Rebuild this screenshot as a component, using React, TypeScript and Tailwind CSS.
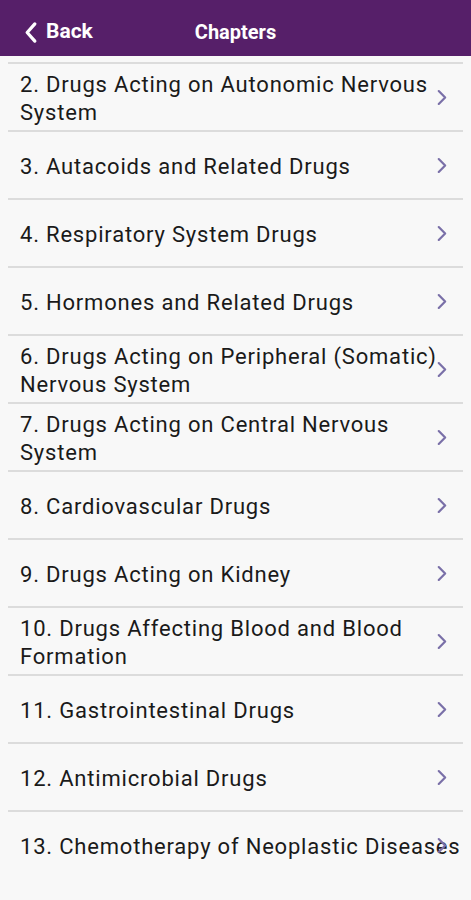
import React from 'react';

const chapters = [
  '2. Drugs Acting on Autonomic Nervous System',
  '3. Autacoids and Related Drugs',
  '4. Respiratory System Drugs',
  '5. Hormones and Related Drugs',
  '6. Drugs Acting on Peripheral (Somatic) Nervous System',
  '7. Drugs Acting on Central Nervous System',
  '8. Cardiovascular Drugs',
  '9. Drugs Acting on Kidney',
  '10. Drugs Affecting Blood and Blood Formation',
  '11. Gastrointestinal Drugs',
  '12. Antimicrobial Drugs',
  '13. Chemotherapy of Neoplastic Diseases',
];

const Chevron: React.FC<{ className?: string }> = ({ className }) => (
  <svg viewBox="0 0 12 20" className={className} fill="none" stroke="currentColor" strokeWidth="2.4" strokeLinecap="round" strokeLinejoin="round">
    <path d="M3 3l7 7-7 7" />
  </svg>
);

const App: React.FC = () => {
  return (
    <div className="w-[471px] h-[900px] overflow-hidden bg-[#f8f8f8] font-['Roboto',sans-serif]">
      {/* Header */}
      <div className="h-[56px] bg-[#561f69] flex items-center relative pt-[8px]">
        <div className="flex items-center pl-[24px] text-white">
          <svg viewBox="0 0 14 24" className="w-[14px] h-[23px]" fill="none" stroke="currentColor" strokeWidth="3.4" strokeLinecap="round" strokeLinejoin="round">
            <path d="M11 3L3 12l8 9" />
          </svg>
          <span className="ml-[8px] text-[21px] font-bold">Back</span>
        </div>
        <div className="absolute left-0 right-0 text-center text-white text-[20px] font-bold pointer-events-none">
          Chapters
        </div>
      </div>

      {/* List */}
      <div className="pt-[6px]">
        {chapters.map((c) => (
          <div key={c} className="relative border-t-2 border-[#dcdcdc] mx-[8px]">
            <div className="h-[66px] flex items-center pl-[12px] pt-[3px]">
              <span className="text-[22px] leading-[28px] text-[#1a1a1a] tracking-[0.8px]">{c}</span>
            </div>
            <Chevron className="absolute right-[16px] top-[24px] w-[11px] h-[19px] text-[#7a70a8]" />
          </div>
        ))}
      </div>
    </div>
  );
};

export default App;
